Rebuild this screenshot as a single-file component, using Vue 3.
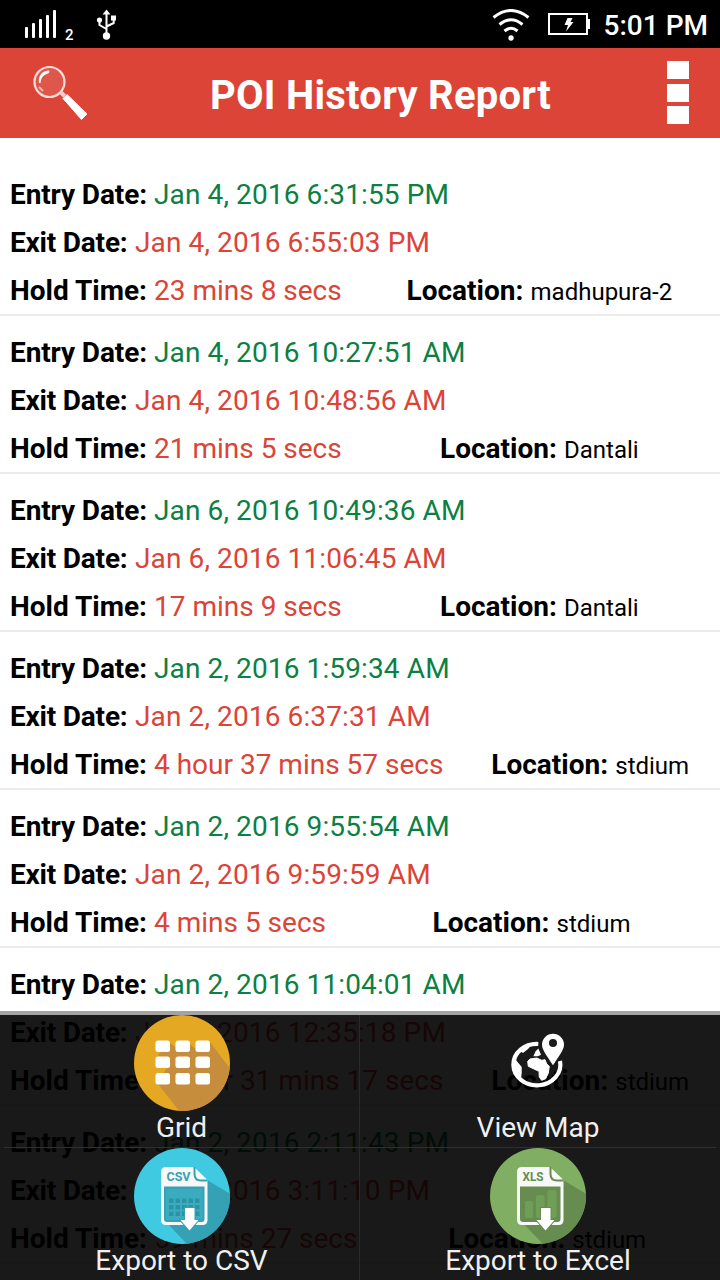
<template>
  <div class="screen">
    <div class="status-bar">
      <svg class="signal" width="32" height="30" viewBox="0 0 32 30">
        <rect x="0" y="17" width="3" height="11" rx="1" />
        <rect x="7" y="13" width="3" height="15" rx="1" />
        <rect x="14" y="9" width="3" height="19" rx="1" />
        <rect x="21" y="5" width="3" height="23" rx="1" />
        <rect x="28" y="0" width="3" height="28" rx="1" />
      </svg>
      <span class="sim">2</span>
      <svg class="usb" width="22" height="32" viewBox="0 0 22 32">
        <path d="M10.5 5V27M10.5 20L3.5 16V11M10.5 17.500L17.700 14V9" class="usb-line" />
        <path d="M10.500 .5L14.500 5.500H6.500Z" />
        <circle cx="3.500" cy="11" r="2.600" />
        <rect x="15" y="6.500" width="5" height="5" />
        <circle cx="10.500" cy="27" r="3.700" />
      </svg>
      <div class="spacer"></div>
      <svg class="wifi" width="38" height="33" viewBox="0 0 38 33">
        <path d="M1.500 8.500Q19 -5.500 36.500 8.500M7.500 15.500Q19 6 30.500 15.500M12.500 22Q19 16.500 25.500 22" />
        <circle cx="19" cy="29" r="2.700" />
      </svg>
      <svg class="battery" width="42" height="22" viewBox="0 0 42 22">
        <path d="M1 1H39V21H1Z" class="battery-case" />
        <rect x="39" y="6" width="3" height="10" />
        <path d="M19.500 5H24.500L22.500 9H25.500L18 18.500L20 12H16.500Z" />
      </svg>
      <span class="time">5:01 PM</span>
    </div>

    <header class="toolbar">
      <svg class="search" width="56" height="58" viewBox="0 0 56 58">
        <circle cx="16.500" cy="18" r="15" class="lens" />
        <path d="M6 19C5 12 9 7 15 6.500C17 6.500 17 9 14 10C10 11 8 14 7.500 19Z" />
        <path d="M6 23L10 27" class="glint" />
        <path d="M27.500 28L31.500 32" class="neck" />
        <path d="M30 34.500L34 30.500L54 50L48.500 55.500Z" class="handle" />
      </svg>
      <h1>POI History Report</h1>
      <div class="more"><i></i><i></i><i></i></div>
    </header>

    <ul class="history">
      <li v-for="item in history" :key="item.entry">
        <div class="line"><b class="w-entry">Entry Date:</b><span class="entry date">{{ item.entry }}</span></div>
        <div class="line"><b class="w-exit">Exit Date:</b><span class="exit date">{{ item.exit }}</span></div>
        <div class="line">
          <b class="w-hold">Hold Time:</b><span class="exit">{{ item.hold }}</span>
          <div class="location"><b class="w-location">Location:</b><small>{{ item.location }}</small></div>
        </div>
      </li>
    </ul>

    <nav class="menu">
      <div class="menu-item">
        <svg width="96" height="96" viewBox="0 0 96 96">
          <defs>
            <clipPath id="disc"><circle cx="48" cy="48" r="48" /></clipPath>
          </defs>
          <circle cx="48" cy="48" r="48" fill="#e5a823" />
          <path d="M24 69L34 50L24 40L36 28L46 36L54 28L62 34L76 27L110 72L80 110H56Z" fill="#c68e3c" clip-path="url(#disc)" />
          <g fill="#fff">
            <template v-for="y in [25.500, 41.500, 58]" :key="y">
              <rect v-for="x in [21.500, 41.500, 61.500]" :key="x" :x="x" :y="y" width="14.500" height="11.500" rx="2.500" />
            </template>
          </g>
        </svg>
        <span>Grid</span>
      </div>
      <div class="menu-item">
        <svg width="96" height="96" viewBox="0 0 96 96">
          <path d="M48.300 29A23.500 20.700 0 1 0 70 46" fill="none" stroke="#fff" stroke-width="4.200" />
          <path d="M24 40L26.700 46L31.700 52V58L31 64L24 60L22 50Z" fill="#fff" />
          <path d="M30 36L37 31L41 30.500L38 34L33 38Z" fill="#fff" />
          <path d="M43.300 41.300L45.700 36.300L48.300 33.500L51 39.700L48 41.300Z" fill="#fff" />
          <path d="M37.700 46.300L40 44L46.700 43L51.700 45.300L55 44.700L56.700 49L59.300 51.300L58.300 58L55.700 63.700L51.700 65.300L49.300 62.300L49 56.300L43.300 53.700L38.300 51.300Z" fill="#fff" stroke="#fff" stroke-width="1" stroke-linejoin="round" />
          <path d="M63 50.300C57 41 52 35 52 29.800A11 11 0 0 1 74 29.800C74 35 69 41 63 50.300Z" fill="#fff" />
          <circle cx="63" cy="28" r="4" fill="#1a1a1a" />
        </svg>
        <span>View Map</span>
      </div>
      <div v-for="file in exports" :key="file.tag" class="menu-item">
        <svg width="96" height="96" viewBox="0 0 96 96">
          <circle cx="48" cy="48" r="48" :fill="file.disc" />
          <path d="M73 32L110 54L90 110H66L34 76Z" :fill="file.shade" clip-path="url(#disc)" />
          <path d="M32 19H60L73.500 32V72Q73.500 77 68.500 77H32Q27 77 27 72V24Q27 19 32 19Z" fill="#f8f8f8" />
          <path d="M30 38.500H70.500V71Q70.500 74 67.500 74H33Q30 74 30 71Z" :fill="file.body" />
          <path d="M60.500 19V26Q60.500 32.500 67 32.500H73.500" fill="none" :stroke="file.body" stroke-width="2" />
          <text x="32.500" y="33" :fill="file.body" :textLength="file.tagWidth" lengthAdjust="spacingAndGlyphs">{{ file.tag }}</text>
          <g v-if="file.tag === 'CSV'" fill="#2c93a4">
            <rect x="32" y="41" width="36.500" height="31" fill="#3aacc0" />
            <template v-for="y in [50.500, 57, 63.500]" :key="y">
              <rect v-for="x in [35, 41.500, 48, 54.500, 61]" :key="x" :x="x" :y="y" width="4.500" height="4.500" />
            </template>
          </g>
          <g v-else fill="#6f9f56">
            <rect x="35" y="53" width="8" height="17" rx="2" />
            <rect x="46" y="47" width="8.500" height="23" rx="2" />
            <rect x="57.500" y="42" width="9" height="28" rx="2" />
          </g>
          <path d="M51 60H60.500V72H64.500L55.500 82.500L46.500 72H51Z" fill="#fff" :stroke="file.body" stroke-width="2" paint-order="stroke" />
        </svg>
        <span>{{ file.label }}</span>
      </div>
    </nav>
  </div>
</template>

<script setup>
const history = [
  { entry: 'Jan 4, 2016 6:31:55 PM', exit: 'Jan 4, 2016 6:55:03 PM', hold: '23 mins 8 secs', location: 'madhupura-2' },
  { entry: 'Jan 4, 2016 10:27:51 AM', exit: 'Jan 4, 2016 10:48:56 AM', hold: '21 mins 5 secs', location: 'Dantali' },
  { entry: 'Jan 6, 2016 10:49:36 AM', exit: 'Jan 6, 2016 11:06:45 AM', hold: '17 mins 9 secs', location: 'Dantali' },
  { entry: 'Jan 2, 2016 1:59:34 AM', exit: 'Jan 2, 2016 6:37:31 AM', hold: '4 hour 37 mins 57 secs', location: 'stdium' },
  { entry: 'Jan 2, 2016 9:55:54 AM', exit: 'Jan 2, 2016 9:59:59 AM', hold: '4 mins 5 secs', location: 'stdium' },
  { entry: 'Jan 2, 2016 11:04:01 AM', exit: 'Jan 2, 2016 12:35:18 PM', hold: '1 hour 31 mins 17 secs', location: 'stdium' },
  { entry: 'Jan 2, 2016 2:11:43 PM', exit: 'Jan 2, 2016 3:11:10 PM', hold: '59 mins 27 secs', location: 'stdium' }
];

const exports = [
  { tag: 'CSV', tagWidth: 24, label: 'Export to CSV', disc: '#40cae2', shade: '#34a1b5', body: '#34a1b5' },
  { tag: 'XLS', tagWidth: 21, label: 'Export to Excel', disc: '#80af63', shade: '#668c4f', body: '#668c4f' }
];
</script>

<style>
body {
  background: #fff;
}
</style>

<style scoped>
.screen {
  position: relative;
  width: 720px;
  height: 1280px;
  overflow: hidden;
  background: #fff;
  font-family: Roboto, sans-serif;
  font-size: 28px;
  color: #000;
}

.status-bar {
  display: flex;
  height: 48px;
  padding: 0 12px 0 25px;
  background: #000;
  color: #fff;
}

.status-bar svg {
  fill: #fff;
  flex: none;
}

.signal {
  margin-top: 10px;
}

.sim {
  margin: 26px 0 0 8px;
  width: 10px;
  font-size: 15px;
  line-height: 18px;
  font-weight: 500;
}

.usb {
  margin: 9px 0 0 21px;
}

.spacer {
  flex: 1;
}

.wifi {
  margin: 9px 18px 0 0;
}

.battery {
  margin: 13px 14px 0 0;
}

.status-bar .battery-case,
.status-bar .usb-line,
.status-bar .wifi path {
  fill: none;
  stroke: #fff;
  stroke-width: 2;
}

.status-bar .wifi path {
  stroke-width: 3;
}

.time {
  line-height: 52px;
  font-weight: 500;
  white-space: nowrap;
}

.toolbar {
  display: flex;
  align-items: center;
  height: 90px;
  padding: 0 31px 0 33px;
  background: #db4437;
  color: #fff;
}

.search {
  fill: #fff;
}

.lens {
  fill: rgba(255, 255, 255, 0.1);
  stroke: #f9dcd9;
  stroke-width: 2.2;
}

.glint {
  stroke: #f3bcb7;
  stroke-width: 2;
}

.neck {
  stroke: #f6ccc8;
  stroke-width: 4;
}

.handle {
  stroke: #fff;
  stroke-linejoin: round;
}

h1 {
  flex: 1;
  margin: 0 0 0 5px;
  padding-top: 6px;
  text-align: center;
  font-size: 40px;
  line-height: 48px;
  font-weight: 700;
  letter-spacing: 0.25px;
}

.more {
  display: flex;
  flex-direction: column;
  gap: 4.5px;
  padding-bottom: 1px;
}

.more i {
  width: 22px;
  height: 18px;
  background: #fff;
}

.history {
  margin: 0;
  padding: 20px 0 0;
  list-style: none;
}

.history li {
  padding-top: 12px;
  border-bottom: 2px solid #ebebeb;
}

.line {
  display: flex;
  height: 48px;
  line-height: 50px;
  padding-left: 10px;
  white-space: nowrap;
}

.line b {
  flex: none;
  font-weight: 700;
}

.w-entry {
  width: 144px;
  letter-spacing: -0.1px;
}

.w-exit {
  width: 125px;
  letter-spacing: -0.2px;
}

.w-hold {
  width: 144px;
}

.w-location {
  width: 124px;
}

.date {
  letter-spacing: 0.12px;
}

.entry {
  color: #0b8043;
}

.exit {
  color: #db4437;
}

.location {
  flex: 1;
  display: flex;
  justify-content: center;
  margin-left: 17px;
}

.location small {
  font-size: 24px;
  line-height: 52px;
}

.menu {
  position: absolute;
  left: 0;
  right: 0;
  bottom: 0;
  box-sizing: border-box;
  height: 269px;
  padding: 0 4px;
  border-top: 4px solid #a3a3a3;
  background: rgba(0, 0, 0, 0.9);
  background-clip: padding-box;
  display: grid;
  grid-template-columns: 356px 356px;
  grid-template-rows: 133px 132px;
}

.menu-item {
  display: flex;
  flex-direction: column;
  align-items: center;
  color: #f0f0f0;
}

.menu-item:nth-child(odd) {
  border-right: 1px solid #292929;
}

.menu-item:nth-child(-n + 2) {
  border-bottom: 1px solid #303030;
}

.menu-item svg {
  display: block;
  flex: none;
}

.menu-item text {
  font-size: 12px;
  font-weight: 700;
}

.menu-item span {
  line-height: 33px;
}
</style>
